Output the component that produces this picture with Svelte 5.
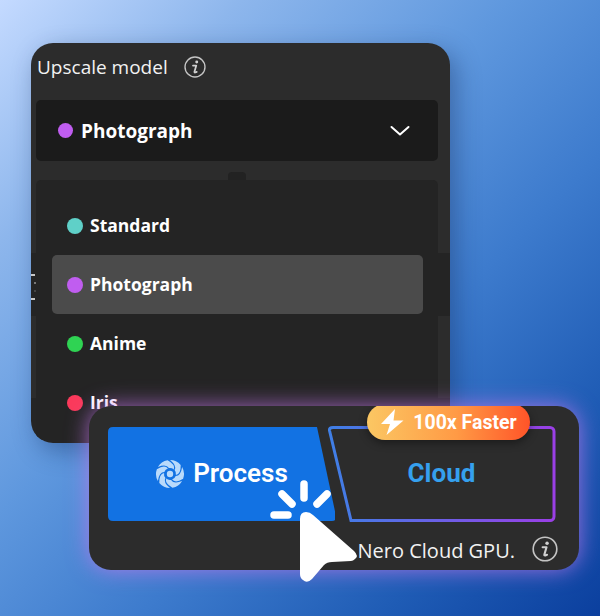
<script>
  const models = [
    { name: 'Standard', color: '#5fd0c8' },
    { name: 'Photograph', color: '#c05df0', active: true },
    { name: 'Anime', color: '#2fd353' },
    { name: 'Iris', color: '#fb3a5b' }
  ];
</script>

{#snippet info(size)}
  <svg class="info" viewBox="0 0 24 24" width={size} height={size} fill="none">
    <circle cx="12" cy="12" r="10.900" stroke="#c4c4c4" stroke-width="1.500" />
    <circle cx="13.900" cy="6.600" r="1.600" fill="#d0d0d0" />
    <path d="M9.800 10.400h3.600l-2 6.800q-.2 1 .8 .8l1.700-.7" stroke="#d0d0d0" stroke-width="1.900" stroke-linecap="round" stroke-linejoin="round" />
  </svg>
{/snippet}

<div class="stage">
  <section class="panel">
    <div class="band">
      <i></i><i class="tick"></i><i class="tick faint"></i><i></i>
    </div>

    <header class="panel-head">
      <span>Upscale model</span>
      {@render info(22)}
    </header>

    <div class="select">
      <i class="dot" style:background="#c05df0"></i>
      <span class="label">Photograph</span>
      <svg class="chevron" viewBox="0 0 20 12" width="20" height="12" fill="none">
        <path d="M1.500 2 10 9.500 18.500 2" stroke="#fff" stroke-width="2" stroke-linecap="round" stroke-linejoin="round" />
      </svg>
    </div>

    <div class="notch"></div>

    <ul class="list">
      {#each models as model}
        <li class="item" class:active={model.active}>
          <i class="dot big" style:background={model.color}></i>
          <span class="label small">{model.name}</span>
        </li>
      {/each}
    </ul>
  </section>

  <section class="card">
    <div class="badge">
      <svg viewBox="0 0 24 26" width="24" height="26">
        <path d="M15 0 1 15h9L6.500 26 23.500 11.500H13.500z" fill="#fff" />
      </svg>
      <span>100x Faster</span>
    </div>

    <div class="modes">
      <button class="mode process">
        <svg viewBox="0 0 30 30" width="30" height="30" fill="#b9dafb">
          {#each [0, 60, 120, 180, 240, 300] as angle}
            <path d="M15 1A14 14 0 0 1 25.700 6Q26 15 20.900 16A6 6 0 0 0 19.600 11.100Q22.100 6.600 15 1z" transform="rotate({angle} 15 15)" />
          {/each}
          <circle cx="15" cy="15" r="3.200" />
        </svg>
        <span>Process</span>
      </button>

      <div class="mode cloud">
        <svg class="outline" viewBox="0 0 228 96" width="228" height="96" fill="none">
          <defs>
            <linearGradient id="edge" x1="0" x2="1" y1="0" y2="0">
              <stop offset="0" stop-color="#3f7fe6" />
              <stop offset="1" stop-color="#9a3fe6" />
            </linearGradient>
          </defs>
          <path d="M5 1.500H222a4 4 0 0 1 4 4V90.500a4 4 0 0 1-4 4H23L1.500 4.500Q1 1.500 5 1.500z" stroke="url(#edge)" stroke-width="3" />
        </svg>
        <span>Cloud</span>
      </div>
    </div>

    <footer class="card-foot">
      <span>Nero Cloud GPU.</span>
      {@render info(26)}
    </footer>
  </section>

  <div class="pointer">
    <svg viewBox="0 0 110 110" width="110" height="110" fill="#fff">
      <path d="M40 6v14M18 16l10 10M63 16 53 26M10 37h14" stroke="#fff" stroke-width="7.500" stroke-linecap="round" />
      <path d="M36 41Q36 34 42 34Q46 34 49 37L90 73Q95 78 91 81Q89 83 87 83L68 84Q63 84 60 87L48 101Q43 106 39 102Q36 100 36 96Z" />
    </svg>
  </div>
</div>

<style>
  :global(body) {
    margin: 0;
  }

  .stage {
    position: relative;
    width: 600px;
    height: 616px;
    overflow: hidden;
    padding-top: 43px;
    box-sizing: border-box;
    font-family: 'Open Sans', 'Noto Sans', sans-serif;
    color: #fff;
    background: linear-gradient(135deg, #c4daff 0%, #8db6ec 20%, #5f98de 42%, #3d7bcd 62%, #1f5cb5 82%, #0b3f9e 100%);
  }

  .panel {
    position: relative;
    width: 419px;
    height: 400px;
    margin-left: 31px;
    box-sizing: border-box;
    padding: 0 12px 0 5px;
    background: linear-gradient(#2c2c2c 355px, #252525 355px);
    border-radius: 22px;
    overflow: hidden;
    box-shadow: 6px 8px 24px rgba(15, 40, 90, 0.4);
  }

  /* darker strip running behind the list, with the stray marks on its left end */
  .band {
    position: absolute;
    left: 0;
    right: 0;
    top: 210px;
    height: 63px;
    box-sizing: border-box;
    padding-top: 4px;
    display: flex;
    flex-direction: column;
    justify-content: center;
    gap: 6px;
    background: #242424;
  }

  .band i {
    display: block;
    width: 4px;
    height: 2px;
    background: #c8c8c8;
  }

  .band i.tick {
    width: 2px;
    margin-left: 3px;
    background: #777;
  }

  .band i.faint {
    background: #444;
  }

  .panel-head {
    position: relative;
    height: 57px;
    box-sizing: border-box;
    padding: 0 0 10px 1px;
    display: flex;
    align-items: center;
    gap: 16px;
    font-size: 19px;
    color: #f2f2f2;
  }

  .select {
    position: relative;
    height: 61px;
    display: flex;
    align-items: center;
    padding: 0 28px 0 22px;
    background: #1b1b1b;
    border-radius: 5px;
  }

  .dot {
    flex: none;
    width: 15px;
    height: 15px;
    border-radius: 50%;
    margin-right: 8px;
  }

  .dot.big {
    width: 16px;
    height: 16px;
    margin-right: 7px;
  }

  .label {
    font-size: 19px;
    font-weight: 700;
  }

  .label.small {
    font-size: 17.500px;
    margin-top: -2px;
  }

  .chevron {
    margin-left: auto;
  }

  .notch {
    position: relative;
    width: 18px;
    height: 8px;
    margin: 11px 0 0 192px;
    background: #222;
    border-radius: 4px 4px 0 0;
  }

  .list {
    position: relative;
    list-style: none;
    margin: 0;
    height: 260px;
    box-sizing: border-box;
    padding: 16px 15px 0 16px;
    background: #242424;
    border-radius: 5px;
  }

  .item {
    height: 59px;
    display: flex;
    align-items: center;
    padding-left: 15px;
    border-radius: 5px;
  }

  .item.active {
    background: #4b4b4b;
  }

  .card {
    position: relative;
    box-sizing: border-box;
    width: 490px;
    height: 164px;
    margin: -37px 0 0 89px;
    padding: 21px 24px 0 19px;
    background: #2c2c2c;
    border-radius: 22px;
    box-shadow: 0 0 22px rgba(200, 120, 240, 0.75);
  }

  .badge {
    position: absolute;
    left: 278px;
    top: -2px;
    width: 163px;
    height: 36px;
    display: flex;
    align-items: center;
    justify-content: center;
    gap: 9px;
    border-radius: 18px;
    background: linear-gradient(90deg, #fbc763, #ff9a45 55%, #ff5428);
    box-shadow: 0 3px 8px rgba(0, 0, 0, 0.4);
    clip-path: inset(2px -12px -14px -12px);
    font: 700 19.500px 'Roboto', sans-serif;
    z-index: 1;
  }

  .modes {
    display: flex;
  }

  .mode {
    height: 94px;
    display: flex;
    align-items: center;
    justify-content: center;
    position: relative;
    padding-bottom: 2px;
    box-sizing: border-box;
    font: 700 26px 'Roboto', sans-serif;
  }

  .process {
    width: 228px;
    border: 0;
    padding: 0 0 3px 0;
    gap: 8px;
    color: #fff;
    font-weight: 600;
    background: #1272e3;
    clip-path: path('M5 0H209L228 89Q229 94 224 94H5Q0 94 0 89V5Q0 0 5 0Z');
  }

  .process svg {
    margin-top: 3px;
  }

  .cloud {
    width: 228px;
    margin-left: -7px;
    color: #35a0ee;
  }

  .outline {
    position: absolute;
    left: 0;
    top: -1px;
  }

  .card-foot {
    display: flex;
    justify-content: flex-end;
    align-items: center;
    gap: 17px;
    height: 60px;
    margin-right: -3px;
    font-size: 20px;
    color: #f2f2f2;
  }

  .card-foot span {
    margin-top: -2px;
  }

  .card-foot :global(svg) {
    margin-top: -4px;
  }

  .pointer {
    position: absolute;
    left: 264px;
    top: 478px;
    width: 110px;
    height: 110px;
    z-index: 2;
  }
</style>
